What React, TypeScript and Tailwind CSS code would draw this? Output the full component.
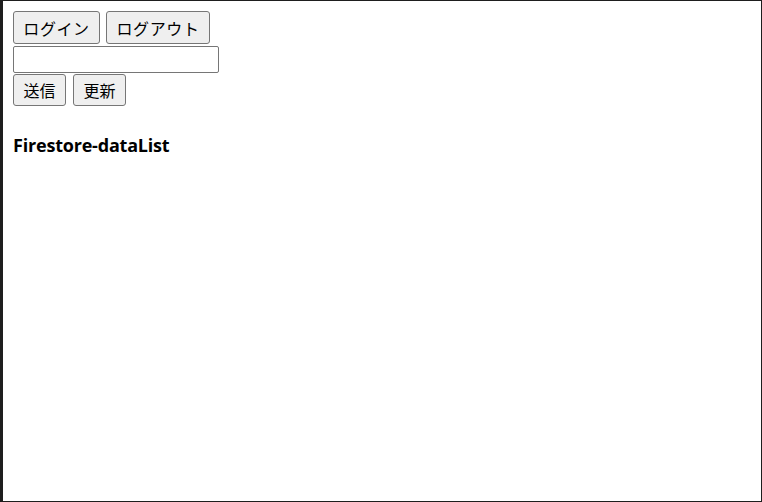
import React, { useState } from "react";

const btn =
  "bg-[#efefef] border border-[#767676] rounded-[3px] text-[16px] text-black leading-none flex items-center justify-center hover:bg-[#e5e5e5]";

export default function App() {
  const [text, setText] = useState("");

  return (
    <div className="w-[762px] h-[502px] flex bg-[#1e1e1e] overflow-hidden">
      {/* left strip: editor window peeking from behind */}
      <div className="w-[3px] shrink-0 bg-[#1e1e1e]" />
      <div className="flex-1 mt-[1px] mr-[1px] mb-[1px] bg-white pl-[10px] pt-[10px] font-['Noto_Sans_CJK_JP','Noto_Sans',sans-serif]">
        <div className="flex gap-[6px]">
          <button className={`${btn} h-[33px] w-[87px] tracking-[0.6px]`}>ログイン</button>
          <button className={`${btn} h-[33px] w-[104px] tracking-[0.6px]`}>ログアウト</button>
        </div>
        <input
          value={text}
          onChange={(e) => setText(e.target.value)}
          className="block mt-[2px] w-[206px] h-[27px] border border-[#767676] rounded-[2px] px-1 text-[14px] outline-none"
        />
        <div className="flex gap-[7px] mt-[1px]">
          <button className={`${btn} h-[32px] w-[53px]`}>送信</button>
          <button className={`${btn} h-[32px] w-[53px]`}>更新</button>
        </div>
        <h2 className="mt-[30px] text-[18px] font-bold text-black font-['Open_Sans','Noto_Sans',sans-serif] leading-none tracking-[-0.2px]">
          Firestore-dataList
        </h2>
      </div>
    </div>
  );
}
